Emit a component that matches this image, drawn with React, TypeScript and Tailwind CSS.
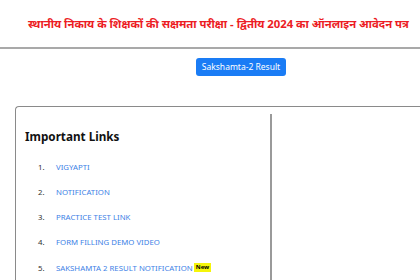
import React from "react";

const links = [
  "VIGYAPTI",
  "NOTIFICATION",
  "PRACTICE TEST LINK",
  "FORM FILLING DEMO VIDEO",
  "SAKSHAMTA 2 RESULT NOTIFICATION",
];

export default function App() {
  return (
    <div className="w-[420px] h-[280px] overflow-hidden bg-white" style={{ fontFamily: '"Noto Sans", "Open Sans", sans-serif' }}>
      <div className="h-[47px] pt-[15px] pl-[28px] whitespace-nowrap">
        <h1 className="text-[11.3px] font-bold text-[#ec1c24] leading-[18px]">
          स्थानीय निकाय के शिक्षकों की सक्षमता परीक्षा - द्वितीय 2024 का ऑनलाइन आवेदन पत्र
        </h1>
      </div>
      <div className="border-t-2 border-[#a9a9a9]" />
      <div className="pt-[9px] pl-[196px] flex">
        <button className="w-[90px] h-[18px] rounded-[3px] bg-[#1a7cf5] text-white text-[8.5px] leading-[18px]">
          Sakshamta-2 Result
        </button>
      </div>
      <div className="mt-[30px] ml-[15px] w-[430px] h-[200px] border-l-[1.5px] border-t-[1.5px] border-[#8a8a8a] rounded-tl-[4px] pt-[7px]">
        <div className="w-[256px] h-[190px] border-r-2 border-[#9a9a9a] pl-[9px]">
          <h2 className="pt-[13px] text-[11.7px] font-bold text-[#111] leading-[18px]">Important Links</h2>
          <ol className="mt-[13.5px] flex flex-col gap-[9.3px]">
            {links.map((l, i) => (
              <li key={l} className="flex items-center h-[16px] text-[7.8px] leading-[16px]">
                <span className="w-[18px] pl-[13px] text-[#333] box-content">{i + 1}.</span>
                <span className="text-[#3d7fe6] whitespace-nowrap">{l}</span>
                {i === 4 && (
                  <span className="ml-[1px] px-[2px] bg-[#f5f50a] text-[6px] font-bold text-black leading-[9px]">New</span>
                )}
              </li>
            ))}
          </ol>
        </div>
      </div>
    </div>
  );
}
